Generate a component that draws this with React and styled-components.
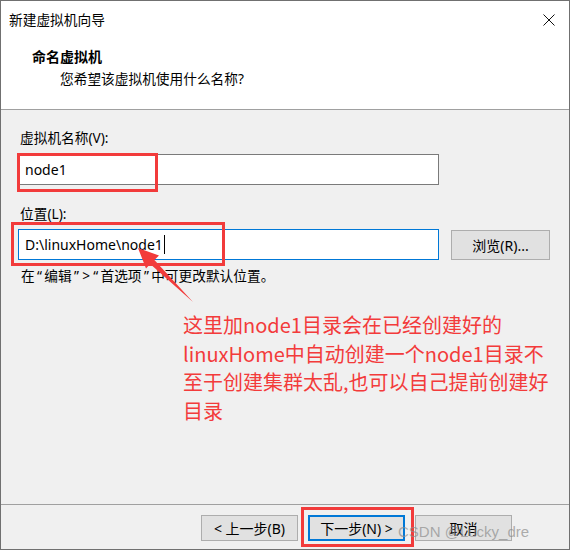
import React from "react";
import styled, { createGlobalStyle } from "styled-components";

const GlobalStyle = createGlobalStyle`
  html, body {
    margin: 0;
    padding: 0;
    background: #ffffff;
  }
  body {
    font-family: "Noto Sans", "Noto Sans CJK SC", sans-serif;
    color: #000;
  }
`;

const ui = `"Noto Sans", "Noto Sans CJK SC", sans-serif`;

const Window = styled.div`
  position: relative;
  box-sizing: border-box;
  width: 570px;
  height: 550px;
  border: 1px solid #707070;
  background: #f0f0f0;
  display: flex;
  flex-direction: column;
  font-family: ${ui};
  font-size: 13.7px;
`;

const Header = styled.header`
  background: #ffffff;
  border-bottom: 1px solid #a0a0a0;
  padding-bottom: 20px;
`;

const TitleBar = styled.div`
  height: 37px;
  display: flex;
  align-items: center;
  justify-content: space-between;
  padding: 0 14px 0 8px;
  line-height: 20px;
`;

const CloseIcon = () => (
  <svg width="12" height="12" viewBox="0 0 12 12">
    <path d="M0.5 0.5 L11.5 11.5 M11.5 0.5 L0.5 11.5" stroke="#111" strokeWidth="1" />
  </svg>
);

const Heading = styled.div`
  margin: 9px 0 0 31px;
  font-weight: 700;
  font-size: 14px;
  line-height: 20px;
`;

const SubHeading = styled.div`
  margin: 2px 0 0 59px;
  line-height: 20px;
`;

const Body = styled.main`
  flex: 1;
  padding: 18px 0 0 17px;
`;

const Label = styled.div`
  line-height: 20px;
  margin-left: 2px;
  margin-top: ${p => p.$top || 0}px;
`;

const Row = styled.div`
  display: flex;
  align-items: center;
  margin-top: ${p => p.$top || 0}px;
`;

const Field = styled.div`
  box-sizing: border-box;
  width: 421px;
  height: 31px;
  border: 1px solid ${p => (p.$focused ? "#0078d7" : "#7a7a7a")};
  background: #ffffff;
  display: flex;
  align-items: center;
  padding-left: 6px;
  font-size: 14px;
  white-space: nowrap;
`;

const Caret = styled.span`
  display: inline-block;
  width: 1px;
  height: 19px;
  background: #000;
  margin-left: 1px;
`;

const Button = styled.div`
  box-sizing: border-box;
  width: ${p => p.$w || 97}px;
  height: ${p => p.$h || 26}px;
  margin-left: ${p => p.$gap || 0}px;
  background: #e1e1e1;
  border: ${p => (p.$primary ? "2px solid #0078d7" : "1px solid #adadad")};
  display: flex;
  align-items: center;
  justify-content: center;
  font-size: 14px;
  white-space: nowrap;
`;

const Hint = styled.div`
  margin: 6px 0 0 3px;
  line-height: 20px;
  white-space: nowrap;
`;

// the dialog font gives quotes and ">" a wider box than Noto Sans does
const Punct = styled.span`
  display: inline-block;
  width: 9.6px;
  text-align: center;
`;

const Note = styled.div`
  margin: 25px 0 0 165px;
  color: #f33b3b;
  font-family: "Noto Sans CJK SC", sans-serif;
  font-size: 20px;
  line-height: 28.5px;
  white-space: nowrap;
`;

const Footer = styled.footer`
  border-top: 1px solid #a0a0a0;
  height: 45px;
  display: flex;
  justify-content: flex-end;
  align-items: flex-start;
  gap: 10px;
  padding: 10px 57px 0 0;
  box-sizing: border-box;
`;

const RedBox = styled.div`
  position: absolute;
  left: ${p => p.$x - 1}px;
  top: ${p => p.$y - 1}px;
  width: ${p => p.$w}px;
  height: ${p => p.$h}px;
  box-sizing: border-box;
  border: 3px solid #f23b3b;
  pointer-events: none;
`;

const ArrowLayer = styled.svg`
  position: absolute;
  left: -1px;
  top: -1px;
  pointer-events: none;
`;

const Watermark = styled.div`
  position: absolute;
  left: 397px;
  top: 522px;
  font-family: "Liberation Sans", sans-serif;
  font-size: 15px;
  color: rgba(140, 140, 140, 0.7);
  white-space: nowrap;
`;

export default function App() {
  return (
    <>
      <GlobalStyle />
      <Window>
        <Header>
          <TitleBar>
            <span>新建虚拟机向导</span>
            <CloseIcon />
          </TitleBar>
          <Heading>命名虚拟机</Heading>
          <SubHeading>您希望该虚拟机使用什么名称?</SubHeading>
        </Header>

        <Body>
          <Label>虚拟机名称(V):</Label>
          <Row $top={6}>
            <Field>node1</Field>
          </Row>
          <Label $top={19}>位置(L):</Label>
          <Row $top={5}>
            <Field $focused>
              D:\linuxHome\node1
              <Caret />
            </Field>
            <Button $w={99} $h={30} $gap={12}>
              浏览(R)...
            </Button>
          </Row>
          <Hint>
            在<Punct>“</Punct>编辑<Punct>”</Punct>
            <Punct>&gt;</Punct>
            <Punct>“</Punct>首选项<Punct>”</Punct>中可更改默认位置。
          </Hint>
          <Note>
            <div>这里加node1目录会在已经创建好的</div>
            <div>linuxHome中自动创建一个node1目录不</div>
            <div>至于创建集群太乱,也可以自己提前创建好</div>
            <div>目录</div>
          </Note>
        </Body>

        <Footer>
          <Button>&lt; 上一步(B)</Button>
          <Button $primary>下一步(N) &gt;</Button>
          <Button>取消</Button>
        </Footer>

        <RedBox $x={17} $y={153} $w={141} $h={39} />
        <RedBox $x={11} $y={222} $w={214} $h={44} />
        <RedBox $x={301} $y={507} $w={113} $h={40} />

        <ArrowLayer width="570" height="551">
          <polygon
            points="138,248 159,255.6 154.4,259.9 193,302 150.2,264.1 146,268.4"
            fill="#f23b3b"
          />
        </ArrowLayer>

        <Watermark>CSDN @Lucky_dre</Watermark>
      </Window>
    </>
  );
}
